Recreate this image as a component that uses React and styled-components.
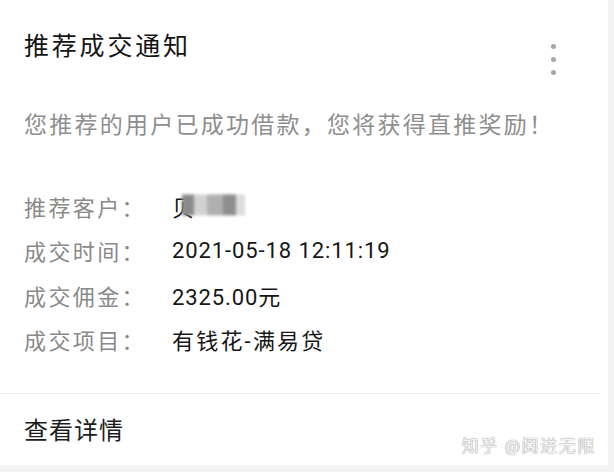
import React from "react";
import styled, { createGlobalStyle } from "styled-components";

const GlobalStyle = createGlobalStyle`
  html, body {
    margin: 0;
    padding: 0;
    background: #f3f3f3;
  }
  body {
    font-family: Roboto, "Noto Sans CJK SC", sans-serif;
  }
`;

const Card = styled.div`
  position: relative;
  width: 608px;
  height: 465px;
  background: #fff;
  display: flex;
  flex-direction: column;
  overflow: hidden;
`;

const Header = styled.div`
  display: flex;
  justify-content: space-between;
  align-items: flex-start;
  padding: 34px 52px 0 24px;
`;

const Title = styled.h1`
  margin: 0;
  font-size: 25px;
  line-height: 25px;
  font-weight: 400;
  letter-spacing: 2.8px;
  color: #141414;
`;

const Dots = styled.div`
  display: flex;
  flex-direction: column;
  gap: 8px;
  margin-top: 10px;
`;

const Dot = styled.span`
  width: 5px;
  height: 5px;
  border-radius: 50%;
  background: #a6a6a6;
`;

const Desc = styled.p`
  margin: 39px 0 0 24px;
  font-size: 23px;
  line-height: 23px;
  letter-spacing: 2.25px;
  color: #8e8e8e;
`;

const Details = styled.div`
  margin-top: 47px;
  padding-left: 24px;
  display: flex;
  flex-direction: column;
`;

const Row = styled.div`
  display: grid;
  grid-template-columns: 148px 1fr;
  align-items: center;
  height: 44.3px;
`;

const Label = styled.span`
  font-size: 22px;
  letter-spacing: 2.4px;
  color: #8a8a8a;
`;

const Value = styled.span`
  position: relative;
  font-size: 22px;
  letter-spacing: ${(p) => (p.$cjk ? "2.2px" : "0.9px")};
  color: #161616;
`;

const Mosaic = styled.span`
  position: absolute;
  left: 10px;
  top: 50%;
  transform: translateY(-55%);
  display: flex;
  height: 21px;
  filter: blur(1.6px);
`;

const Tile = styled.span`
  width: ${(p) => p.$w}px;
  background: ${(p) => p.$c};
`;

const Divider = styled.div`
  margin-top: 32px;
  height: 1px;
  margin-right: 8px;
  background: #ececec;
`;

const Footer = styled.div`
  padding: 25px 24px 0;
  font-size: 24px;
  line-height: 24px;
  letter-spacing: 1px;
  color: #1c1c1c;
`;

const Watermark = styled.span`
  position: absolute;
  right: 12px;
  bottom: 8px;
  font-size: 17px;
  letter-spacing: 1.6px;
  color: #f4f4f4;
  text-shadow: 0 0 1px #9a9a9a, 0 0 1px #9a9a9a;
`;

const rows = [
  { label: "成交时间：", value: "2021-05-18 12:11:19" },
  { label: "成交佣金：", value: "2325.00元" },
  { label: "成交项目：", value: "有钱花-满易贷", cjk: true },
];

export default function App() {
  return (
    <>
      <GlobalStyle />
      <Card>
        <Header>
          <Title>推荐成交通知</Title>
          <Dots>
            <Dot />
            <Dot />
            <Dot />
          </Dots>
        </Header>
        <Desc>您推荐的用户已成功借款，您将获得直推奖励！</Desc>
        <Details>
          <Row>
            <Label>推荐客户：</Label>
            <Value $cjk>
              贝<span style={{ color: "#fff" }}>某某</span>
              <Mosaic>
                <Tile $w={12} $c="#8a8a8a" />
                <Tile $w={13} $c="#d2d2d2" />
                <Tile $w={16} $c="#b0b0b0" />
                <Tile $w={13} $c="#8e8e8e" />
                <Tile $w={9} $c="#dcdcdc" />
              </Mosaic>
            </Value>
          </Row>
          {rows.map((r) => (
            <Row key={r.label}>
              <Label>{r.label}</Label>
              <Value $cjk={r.cjk}>{r.value}</Value>
            </Row>
          ))}
        </Details>
        <Divider />
        <Footer>查看详情</Footer>
        <Watermark>知乎 @阅进无限</Watermark>
      </Card>
    </>
  );
}
